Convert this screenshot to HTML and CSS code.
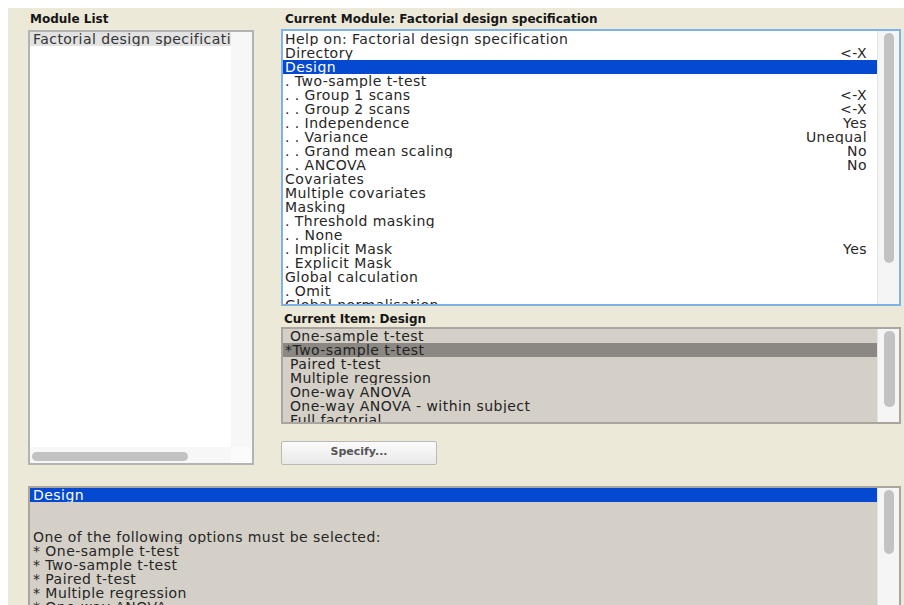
FILE: index.html
```html
<!DOCTYPE html>
<html lang="en">
<head>
<meta charset="utf-8">
<title>Batch Editor</title>
<link rel="stylesheet" href="styles.css">
</head>
<body>
<div class="app">
  <div class="top">
    <section class="col col-left">
      <h2 class="label">Module List</h2>
      <div class="listbox module-list">
        <div class="viewport">
          <div class="row row-soft">Factorial design specification</div>
        </div>
        <div class="vtrack vtrack-empty"></div>
        <div class="htrack"><span class="hthumb"></span></div>
        <div class="corner"></div>
      </div>
    </section>

    <section class="col col-right">
      <h2 class="label label-wide">Current Module: Factorial design specification</h2>
      <div class="listbox module-tree">
        <div class="viewport">
          <div class="row"><span>Help on: Factorial design specification</span></div>
          <div class="row"><span>Directory</span><span class="val">&lt;-X</span></div>
          <div class="row row-sel"><span>Design</span></div>
          <div class="row"><span>. Two-sample t-test</span></div>
          <div class="row"><span>. . Group 1 scans</span><span class="val">&lt;-X</span></div>
          <div class="row"><span>. . Group 2 scans</span><span class="val">&lt;-X</span></div>
          <div class="row"><span>. . Independence</span><span class="val">Yes</span></div>
          <div class="row"><span>. . Variance</span><span class="val">Unequal</span></div>
          <div class="row"><span>. . Grand mean scaling</span><span class="val">No</span></div>
          <div class="row"><span>. . ANCOVA</span><span class="val">No</span></div>
          <div class="row"><span>Covariates</span></div>
          <div class="row"><span>Multiple covariates</span></div>
          <div class="row"><span>Masking</span></div>
          <div class="row"><span>. Threshold masking</span></div>
          <div class="row"><span>. . None</span></div>
          <div class="row"><span>. Implicit Mask</span><span class="val">Yes</span></div>
          <div class="row"><span>. Explicit Mask</span></div>
          <div class="row"><span>Global calculation</span></div>
          <div class="row"><span>. Omit</span></div>
          <div class="row"><span>Global normalisation</span></div>
          <div class="row"><span>. Overall grand mean scaling</span><span class="val">No</span></div>
        </div>
        <div class="vtrack"><span class="thumb thumb-tree"></span></div>
      </div>

      <h2 class="label label-item">Current Item: Design</h2>
      <div class="listbox grey item-list">
        <div class="viewport">
          <div class="row opt"> One-sample t-test</div>
          <div class="row opt row-grey">*Two-sample t-test</div>
          <div class="row opt"> Paired t-test</div>
          <div class="row opt"> Multiple regression</div>
          <div class="row opt"> One-way ANOVA</div>
          <div class="row opt"> One-way ANOVA - within subject</div>
          <div class="row opt"> Full factorial</div>
          <div class="row opt"> Flexible factorial</div>
        </div>
        <div class="vtrack"><span class="thumb thumb-items"></span></div>
      </div>

      <button class="specify" type="button">Specify...</button>
    </section>
  </div>

  <div class="listbox grey help">
    <div class="viewport">
      <div class="row row-sel"><span>Design</span></div>
      <div class="row"></div>
      <div class="row"></div>
      <div class="row">One of the following options must be selected:</div>
      <div class="row">* One-sample t-test</div>
      <div class="row">* Two-sample t-test</div>
      <div class="row">* Paired t-test</div>
      <div class="row">* Multiple regression</div>
      <div class="row">* One-way ANOVA</div>
      <div class="row">* One-way ANOVA - within subject</div>
    </div>
    <div class="vtrack"><span class="thumb thumb-help"></span></div>
  </div>
</div>
</body>
</html>
```

FILE: styles.css
```css
html,
body {
  overflow: hidden;
}

body {
  margin: 8px 0 0 8px;
  background: #ffffff;
  font-family: "DejaVu Sans", "Liberation Sans", sans-serif;
}

.app {
  box-sizing: border-box;
  height: 640px;
  padding: 4px 0 0 20px;
  background: #ece9d8;
}

.top {
  display: grid;
  grid-template-columns: 226px 620px;
  column-gap: 27px;
}

.col {
  display: flex;
  flex-direction: column;
}

/* panel captions */
.label {
  margin: 0;
  padding-left: 2px;
  font: bold 12px/14px "DejaVu Sans", sans-serif;
  color: #161616;
  white-space: nowrap;
}

.label-wide {
  padding-left: 4px;
}

.label-item {
  margin-top: 6px;
  padding-left: 3px;
}

/* generic list box */
.listbox {
  box-sizing: border-box;
  display: flex;
  overflow: hidden;
  background: #ffffff;
  border: 2px solid #b3b3b3;
}

.viewport {
  flex: 1;
  min-width: 0;
  overflow: hidden;
}

.row {
  display: flex;
  justify-content: space-between;
  height: 14px;
  padding: 0 10px 0 2px;
  font-size: 14px;
  letter-spacing: 0.45px;
  line-height: 14px;
  color: #262626;
  white-space: pre;
  overflow: hidden;
}

.row-sel {
  background: #0449cf;
  color: #ffffff;
}

.val {
  flex: none;
}

/* vertical scrollbar */
.vtrack {
  box-sizing: border-box;
  flex: none;
  width: 22px;
  padding: 2px 0 0 6px;
  background: #f5f5f5;
  border-left: 1px solid #e4e4e4;
}

.thumb {
  display: block;
  width: 10px;
  border-radius: 5px;
  background: #c2c2c2;
}

/* module list (left) */
.module-list {
  display: grid;
  grid-template-columns: 1fr 21px;
  grid-template-rows: 1fr 16px;
  height: 435px;
  margin-top: 4px;
}

.module-list .viewport {
  grid-column: 1;
  grid-row: 1;
}

.module-list .row {
  padding-left: 3px;
}

.row-soft {
  background: #e2e2e2;
  color: #333333;
}

.vtrack-empty {
  width: 21px;
  padding: 0;
  background: #f7f7f7;
  border-left: 0;
}

.htrack {
  grid-column: 1;
  grid-row: 2;
  padding: 5px 0 0 2px;
  background: #f7f7f7;
}

.hthumb {
  display: block;
  width: 156px;
  height: 9px;
  border-radius: 5px;
  background: #c2c2c2;
}

.corner {
  grid-column: 2;
  grid-row: 2;
  background: #fbfbfb;
}

/* module tree (right, top) */
.module-tree {
  height: 277px;
  margin-top: 3px;
  border-color: #7fb3e6;
}

.module-tree .viewport {
  padding-top: 1px;
}

.thumb-tree {
  height: 230px;
}

/* option list and help text */
.grey {
  background: #d4d0c8;
  border-color: #aaa69f;
}

.item-list {
  height: 97px;
  margin-top: 1px;
}

.opt {
  padding-left: 2px;
  color: #222222;
}

.row-grey {
  background: #8b8883;
}

.thumb-items {
  width: 11px;
  height: 76px;
}

.specify {
  box-sizing: border-box;
  width: 156px;
  height: 24px;
  margin-top: 17px;
  padding: 0 0 3px;
  border: 1px solid #b9b9b9;
  border-radius: 2px;
  background: linear-gradient(#fbfbfb, #e9e9e9);
  font: bold 11px "DejaVu Sans", sans-serif;
  color: #555555;
}

.help {
  height: 140px;
  margin-top: 21px;
  width: 873px;
}

.help .row {
  padding-left: 3px;
}

.thumb-help {
  height: 64px;
}
```
